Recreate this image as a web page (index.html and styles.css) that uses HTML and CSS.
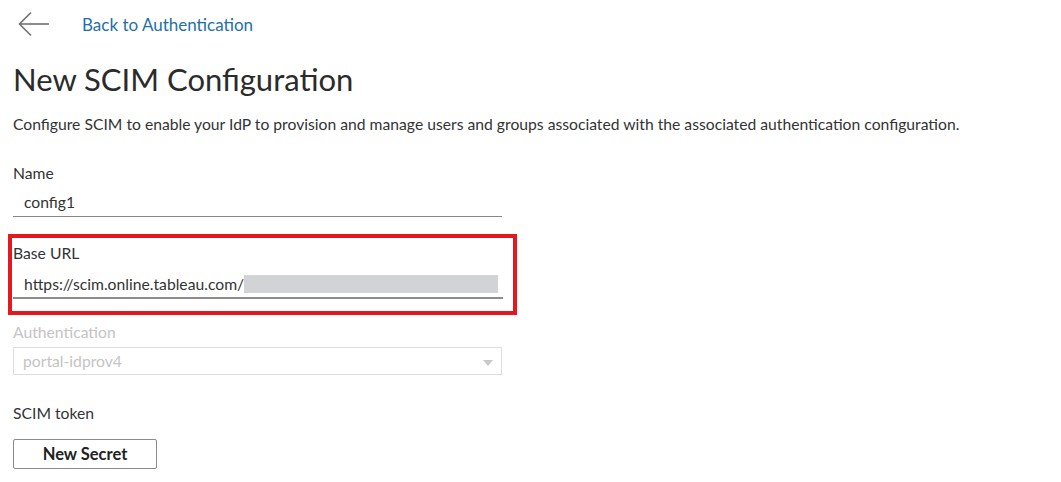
FILE: index.html
```html
<!DOCTYPE html>
<html lang="en">
<head>
    <meta charset="UTF-8">
    <meta name="viewport" content="width=device-width, initial-scale=1.0">
    <title>New SCIM Configuration</title>
    <link rel="stylesheet" href="styles.css">
</head>
<body>

    <!-- back navigation -->
    <div class="back-row">
        <svg class="back-arrow" width="32" height="26" viewBox="0 0 32 26" fill="none" stroke="#707070" stroke-width="1.6">
            <path d="M31 13 H2"/>
            <path d="M13 1.5 L1.5 13 L13 24.5"/>
        </svg>
        <a href="#" class="back-link">Back to Authentication</a>
    </div>

    <h1 class="page-title">New SCIM Configuration</h1>
    <p class="page-desc">Configure SCIM to enable your IdP to provision and manage users and groups associated with the associated authentication configuration.</p>

    <div class="field">
        <label class="field-label">Name</label>
        <div class="text-input">config1</div>
    </div>

    <div class="field field-marked">
        <label class="field-label">Base URL</label>
        <div class="text-input">https://scim.online.tableau.com/<span class="redacted"></span></div>
    </div>

    <div class="field field-disabled">
        <label class="field-label">Authentication</label>
        <div class="select-box">
            <span>portal-idprov4</span>
            <span class="caret"></span>
        </div>
    </div>

    <div class="field field-token">
        <label class="field-label">SCIM token</label>
        <button class="secret-btn">New Secret</button>
    </div>

</body>
</html>
```

FILE: styles.css
```css
/* page basics */
body {
    font-family: "Lato", "Open Sans", Arial, sans-serif;
    color: #333;
    background: #fff;
    margin: 0;
    padding: 0 13px;
}

/* --- back navigation --- */
.back-row {
    display: flex;
    align-items: center;
    height: 48px;
    padding-left: 5px;
}
.back-arrow { flex-shrink: 0; }
.back-link {
    margin-left: 32px;
    color: #1f6fa8;
    font-size: 17px;
    text-decoration: none;
}

.page-title {
    font-size: 31px;
    font-weight: 400;
    color: #2b2b2b;
    margin: 12px 0 0;
    line-height: 38px;
}
.page-desc {
    font-size: 15.7px;
    margin: 16px 0 0;
    line-height: 20px;
}

/* --- form fields --- */
.field {
    width: 489px;
    margin-top: 29px;
}
.field-label {
    display: block;
    font-size: 15.7px;
    line-height: 20px;
}
.text-input {
    font-size: 15.7px;
    line-height: 18px;
    padding: 4px 11px 5px;
    margin-top: 6px;
    border-bottom: 1px solid #888;
    display: flex;
    align-items: center;
}
.redacted {
    display: inline-block;
    flex: 1;
    height: 18px;
    background: #d2d3d4;
    margin-right: -6px;
}

/* red outline around the base url field */
.field-marked {
    width: 490px;
    margin: 17px 0 0 -5px;
    padding: 5px 10px 12px 1px;
    border: 4px solid #e3191f;
}
.field-marked .text-input {
    margin-top: 8px;
    border-bottom: 2px solid #8c8c8c;
    padding-bottom: 4px;
}

.field-disabled {
    margin-top: 7px;
    color: #c4c4c4;
}
.select-box {
    display: flex;
    justify-content: space-between;
    align-items: center;
    height: 26px;
    margin-top: 5px;
    padding: 0 8px 0 9px;
    border: 1px solid #ddd;
    font-size: 15.7px;
}
.caret {
    width: 0;
    height: 0;
    border-left: 5px solid transparent;
    border-right: 5px solid transparent;
    border-top: 6px solid #c8c8c8;
    margin-top: 3px;
}

.field-token { margin-top: 28px; }
.secret-btn {
    margin-top: 16px;
    width: 144px;
    height: 30px;
    background: #fff;
    border: 1px solid #8a8a8a;
    border-radius: 2px;
    font-family: inherit;
    font-size: 16.5px;
    font-weight: 700;
    color: #222;
    cursor: pointer;
}
```
